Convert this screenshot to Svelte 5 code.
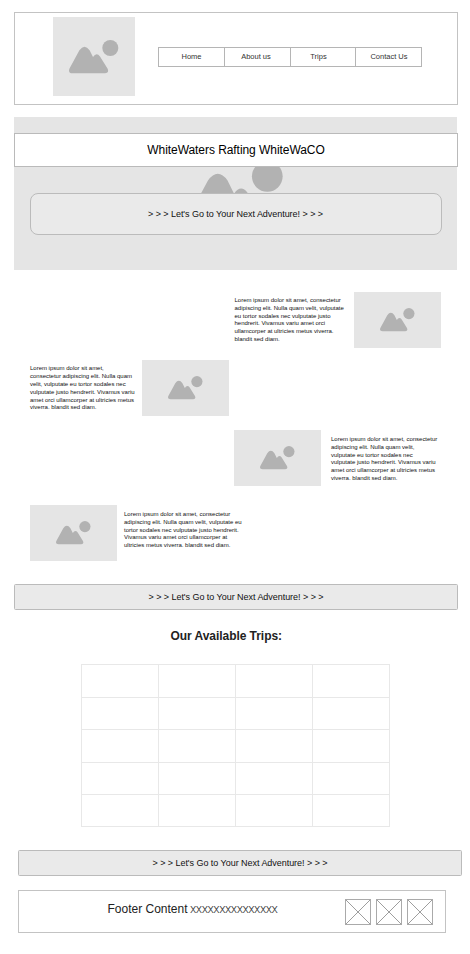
<script>
  const nav = ['Home', 'About us', 'Trips', 'Contact Us'];
  const cta = "> > > Let's Go to Your Next Adventure! > > >";
  const features = [
    { kind: 'one', lines: ['Lorem ipsum dolor sit amet, consectetur', 'adipiscing elit. Nulla quam velit, vulputate', 'eu tortor sodales nec vulputate justo', 'hendrerit. Vivamus variu amet orci', 'ullamcorper at ultricies metus viverra.', 'blandit sed diam.'] },
    { kind: 'two', lines: ['Lorem ipsum dolor sit amet,', 'consectetur adipiscing elit. Nulla quam', 'velit, vulputate eu tortor sodales nec', 'vulputate justo hendrerit. Vivamus variu', 'amet orci ullamcorper at ultricies metus', 'viverra. blandit sed diam.'] },
    { kind: 'three', lines: ['Lorem ipsum dolor sit amet, consectetur', 'adipiscing elit. Nulla quam velit,', 'vulputate eu tortor sodales nec', 'vulputate justo hendrerit. Vivamus variu', 'amet orci ullamcorper at ultricies metus', 'viverra. blandit sed diam.'] },
    { kind: 'four', lines: ['Lorem ipsum dolor sit amet, consectetur', 'adipiscing elit. Nulla quam velit, vulputate eu', 'tortor sodales nec vulputate justo hendrerit.', 'Vivamus variu amet orci ullamcorper at', 'ultricies metus viverra. blandit sed diam.'] }
  ];
</script>

{#snippet mountain()}
  <svg class="mountain" viewBox="0 0 50 34">
    <path d="M3.5 33.3Q-1.3 33 .5 28.5L10.4 10.2Q15.5 3.2 20.6 10.2L24 17Q27.5 12 31 16.5L38.5 28.5Q40.5 33 36 33.3Z" />
    <circle cx="41.3" cy="8" r="8" />
  </svg>
{/snippet}

<div class="page">
  <header>
    <div class="logo">{@render mountain()}</div>
    <nav>
      {#each nav as item}<a href="#top"><span>{item}</span></a>{/each}
    </nav>
  </header>

  <section class="hero">
    <div class="hero-art">{@render mountain()}</div>
    <h1><span>WhiteWaters Rafting WhiteWaCO</span></h1>
    <button class="hero-cta"><span class="cta-text">{cta}</span></button>
  </section>

  <main>
    {#each features as f}
      <article class={f.kind}>
        <div class="photo">{@render mountain()}</div>
        <p>{#each f.lines as line}<span>{line}</span>{/each}</p>
      </article>
    {/each}
  </main>

  <button class="bar"><span class="cta-text">{cta}</span></button>
  <h2><span>Our Available Trips:</span></h2>
  <div class="trips">
    {#each Array(20) as _}<div></div>{/each}
  </div>
  <button class="bar last"><span class="cta-text">{cta}</span></button>

  <footer>
    <div class="foot-text"><span class="label">Footer Content</span><span class="xs">xxxxxxxxxxxxxxx</span></div>
    <div class="social">
      {#each Array(3) as _}
        <svg viewBox="0 0 26 26"><path d="M.5 .5H25.5V25.5H.5Z" stroke="#aaa" /><path d="M.5 .5L25.5 25.5M25.5 .5L.5 25.5" stroke="#858585" stroke-width=".8" /></svg>
      {/each}
    </div>
  </footer>
</div>

<style>
  :global(body) { background: #fff; }
  .page {
    box-sizing: border-box;
    width: 470px;
    height: 954px;
    padding: 12px 0 0 14px;
    overflow: hidden;
    font-family: "Liberation Sans", Arial, sans-serif;
    color: #111;
    display: flex;
    flex-direction: column;
    align-items: flex-start;
  }
  .page * { box-sizing: border-box; }
  span { white-space: nowrap; }
  .mountain { display: block; fill: #b2b2b2; }
  header {
    display: flex;
    width: 444px;
    height: 93px;
    border: 1px solid #c3c3c3;
    padding: 4px 0 0 38px;
  }
  .logo { width: 82px; height: 79px; background: #e5e5e5; padding: 23px 0 0 16px; }
  .logo .mountain { width: 50px; height: 34px; }
  nav {
    display: grid;
    grid-template-columns: 65px 66px 65px 66px;
    width: 264px;
    height: 20px;
    margin: 30px 0 0 23px;
    border: 1px solid #b5b5b5;
  }
  nav a {
    display: flex;
    align-items: center;
    justify-content: center;
    padding-bottom: 1px;
    font-size: 7.5px;
    color: #333;
    text-decoration: none;
  }
  nav a + a { border-left: 1px solid #b5b5b5; }
  nav a:nth-child(2) { padding-right: 3px; }
  nav a:nth-child(3) { padding-right: 9px; }
  nav a:nth-child(4) { padding-left: 1px; }
  .hero {
    position: relative;
    width: 443px;
    height: 153px;
    margin-top: 12px;
    padding-top: 16px;
    background: #e5e5e5;
  }
  .hero-art { position: absolute; left: 174px; top: 44px; }
  .hero-art .mountain { width: 96px; height: 65.3px; }
  h1 {
    position: relative;
    display: flex;
    align-items: center;
    justify-content: center;
    width: 444px;
    height: 34px;
    margin: 0;
    background: #fff;
    border: 1px solid #bababa;
    font-size: 12px;
    font-weight: 400;
    letter-spacing: -.06px;
    color: #000;
  }
  button {
    display: flex;
    align-items: center;
    justify-content: center;
    padding: 0;
    font-family: inherit;
    color: #111;
    background: #eaeaea;
    border: 1px solid #bbb;
  }
  .cta-text { font-size: 9px; letter-spacing: -.04px; }
  .hero-cta { position: relative; width: 412px; height: 42px; margin: 26px 0 0 15.5px; border-radius: 8px; padding-bottom: 1px; }
  main { display: flex; flex-direction: column; padding-top: 22px; height: 314px; }
  article { display: flex; height: 56px; }
  .photo { flex: none; width: 87px; height: 56px; background: #e5e5e5; padding: 16px 0 0 26px; }
  .photo .mountain { width: 35px; height: 23.8px; }
  p { display: flex; flex-direction: column; margin: 0; font-size: 6px; line-height: 7.8px; letter-spacing: -.01px; color: #111; }
  .one { flex-direction: row-reverse; width: 427px; }
  .one p { width: 119.5px; padding-top: 5px; }
  .two { flex-direction: row-reverse; width: 215px; margin-top: 12px; }
  .two p { width: 112px; padding-top: 5.4px; }
  .three { margin: 14px 0 0 220px; }
  .three p { padding: 6px 0 0 10px; }
  .four { margin: 19px 0 0 16px; }
  .four p { padding: 6px 0 0 7px; }
  .bar { flex: none; width: 444px; height: 26px; border-radius: 1.5px; }
  h2 { margin: 18px 0 0 156.5px; font-size: 12px; line-height: 16px; font-weight: 700; letter-spacing: -.05px; color: #222; }
  .trips {
    display: grid;
    grid-template-columns: repeat(4, 77px);
    grid-template-rows: 33px 32px 33px 32px 32px;
    width: 309px;
    margin: 20px 0 0 67px;
    border: solid #e8e8e8;
    border-width: 1px 0 0 1px;
  }
  .trips div { border: solid #e8e8e8; border-width: 0 1px 1px 0; }
  .last { margin: 23px 0 0 4px; }
  footer { display: flex; width: 428px; height: 43px; margin: 14px 0 0 4px; border: 1px solid #c3c3c3; }
  .foot-text { display: flex; align-items: baseline; width: 326px; padding: 10px 0 0 88.5px; line-height: 16px; }
  .label { width: 82.5px; font-size: 12px; color: #222; }
  .xs { font-family: Roboto, "Liberation Sans", sans-serif; font-weight: 300; font-size: 13px; letter-spacing: -.5px; color: #333; }
  .social { display: flex; gap: 5px; padding-top: 8px; }
  .social svg { width: 26px; height: 26px; fill: none; }
</style>
